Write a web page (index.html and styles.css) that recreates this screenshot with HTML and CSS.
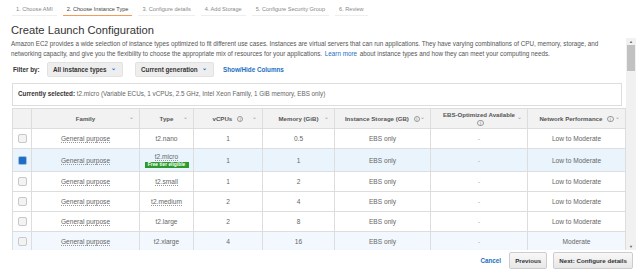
FILE: index.html
```html
<!DOCTYPE html>
<html lang="en">
  <head>
    <meta charset="UTF-8" />
    <title>Create Launch Configuration</title>
    <link rel="stylesheet" href="styles.css">
  </head>
  <body>
    <nav class="tabs">
      <span class="tab">1. Choose AMI</span>
      <span class="tab active">2. Choose Instance Type</span>
      <span class="tab">3. Configure details</span>
      <span class="tab">4. Add Storage</span>
      <span class="tab">5. Configure Security Group</span>
      <span class="tab">6. Review</span>
    </nav>

    <h1>Create Launch Configuration</h1>

    <div class="main">
      <div class="scroll-area">
        <p class="intro">
          Amazon EC2 provides a wide selection of instance types optimized to fit different use cases. Instances are virtual servers that can run applications. They have varying combinations of CPU, memory, storage, and networking capacity, and give you the flexibility to choose the appropriate mix of resources for your applications. <a href="#">Learn more</a> about instance types and how they can meet your computing needs.
        </p>

        <div class="filters">
          <span class="filter-label">Filter by:</span>
          <span class="select select-types">All instance types <span class="caret">&#8964;</span></span>
          <span class="select select-gen">Current generation <span class="caret">&#8964;</span></span>
          <a href="#" class="columns-link">Show/Hide Columns</a>
        </div>

        <div class="selected-box">
          <b>Currently selected:</b> t2.micro (Variable ECUs, 1 vCPUs, 2.5 GHz, Intel Xeon Family, 1 GiB memory, EBS only)
        </div>

        <table class="types">
          <thead>
            <tr>
              <th class="col-check"></th>
              <th class="col-family"><div class="th-in">Family <span class="sort">&#8964;</span></div></th>
              <th class="col-type"><div class="th-in">Type <span class="sort">&#8964;</span></div></th>
              <th class="col-cpu"><div class="th-in">vCPUs <i class="info">i</i> <span class="sort">&#8964;</span></div></th>
              <th class="col-mem"><div class="th-in">Memory (GiB) <span class="sort">&#8964;</span></div></th>
              <th class="col-storage"><div class="th-in">Instance Storage (GB) <i class="info">i</i> <span class="sort">&#8964;</span></div></th>
              <th class="col-ebs"><div class="th-in">EBS-Optimized Available<br><i class="info">i</i> <span class="sort">&#8964;</span></div></th>
              <th class="col-net"><div class="th-in">Network Performance <i class="info">i</i> <span class="sort">&#8964;</span></div></th>
            </tr>
          </thead>
          <tbody>
            <tr>
              <td><span class="check"></span></td>
              <td><span class="dotted">General purpose</span></td>
              <td>t2.nano</td>
              <td>1</td>
              <td>0.5</td>
              <td>EBS only</td>
              <td class="dash">-</td>
              <td>Low to Moderate</td>
            </tr>
            <tr class="row-selected">
              <td><span class="check checked"></span></td>
              <td><span class="dotted">General purpose</span></td>
              <td class="type-cell"><span class="dotted">t2.micro</span><span class="free">Free tier eligible</span></td>
              <td>1</td>
              <td>1</td>
              <td>EBS only</td>
              <td class="dash">-</td>
              <td>Low to Moderate</td>
            </tr>
            <tr>
              <td><span class="check"></span></td>
              <td><span class="dotted">General purpose</span></td>
              <td><span class="dotted">t2.small</span></td>
              <td>1</td>
              <td>2</td>
              <td>EBS only</td>
              <td class="dash">-</td>
              <td>Low to Moderate</td>
            </tr>
            <tr>
              <td><span class="check"></span></td>
              <td><span class="dotted">General purpose</span></td>
              <td><span class="dotted">t2.medium</span></td>
              <td>2</td>
              <td>4</td>
              <td>EBS only</td>
              <td class="dash">-</td>
              <td>Low to Moderate</td>
            </tr>
            <tr>
              <td><span class="check"></span></td>
              <td><span class="dotted">General purpose</span></td>
              <td>t2.large</td>
              <td>2</td>
              <td>8</td>
              <td>EBS only</td>
              <td class="dash">-</td>
              <td>Low to Moderate</td>
            </tr>
            <tr class="row-hover">
              <td><span class="check"></span></td>
              <td><span class="dotted">General purpose</span></td>
              <td>t2.xlarge</td>
              <td>4</td>
              <td>16</td>
              <td>EBS only</td>
              <td class="dash">-</td>
              <td>Moderate</td>
            </tr>
          </tbody>
        </table>
      </div>

      <div class="scrollbar">
        <span class="arrow">&#9650;</span>
        <div class="track"><div class="thumb"></div></div>
        <span class="arrow">&#9660;</span>
      </div>
    </div>

    <footer class="actions">
      <a href="#" class="cancel">Cancel</a>
      <button class="btn">Previous</button>
      <button class="btn">Next: Configure details</button>
    </footer>
  </body>
</html>
```

FILE: styles.css
```css
:root {
  --text: #444444;
  --muted: #777777;
  --link: #1a6fc2;
  --border: #dddddd;
  --header-bg: #f2f2f2;
  --row-selected: #eaf4fd;
  --orange: #f29c5c;
}

* {
  margin: 0;
  padding: 0;
  box-sizing: border-box;
}

body {
  font-family: "Liberation Sans", Arial, sans-serif;
  color: var(--text);
  background: #ffffff;
  width: 640px;
  height: 275px;
  overflow: hidden;
}

a {
  color: var(--link);
  text-decoration: none;
}

/* wizard steps */
.tabs {
  display: flex;
  gap: 6px;
  padding: 4px 0 0 12px;
  height: 18px;
}

.tab {
  font-size: 5.6px;
  color: #888888;
  padding: 2px 4px 3px;
  border-bottom: 1.5px solid #eeeeee;
  height: 12px;
}

.tab.active {
  color: #444444;
  border-bottom-color: var(--orange);
}

h1 {
  font-size: 11.2px;
  font-weight: normal;
  color: #333333;
  padding: 6px 0 0 11px;
  height: 20px;
  line-height: 12px;
}

/* scrolling body */
.main {
  display: flex;
  height: 212px;
}

.scroll-area {
  width: 626px;
  overflow: hidden;
  padding-left: 12px;
}

.intro {
  font-size: 6.3px;
  line-height: 9.5px;
  color: #555555;
  margin: 1px 0 0 -1px;
  width: 614px;
}

.intro a {
  margin: 0 1px;
}

.filters {
  display: flex;
  align-items: center;
  height: 15px;
  margin-top: 4px;
  font-size: 6.3px;
  font-weight: bold;
}

.filter-label {
  color: #333333;
  width: 35px;
  padding-left: 1px;
}

.select {
  display: flex;
  align-items: center;
  justify-content: space-between;
  height: 15px;
  padding: 0 6px 0 5px;
  background: #eeeeee;
  border: 1px solid #e2e2e2;
  border-radius: 2px;
  color: #333333;
}

.select-types {
  width: 76px;
}

.select-gen {
  width: 79px;
  margin-left: 12px;
}

.caret {
  color: var(--link);
  font-size: 6px;
  line-height: 1;
  margin-top: -3px;
}

.columns-link {
  margin-left: 9px;
}

.selected-box {
  margin-top: 6px;
  height: 23px;
  width: 610px;
  border: 1px solid var(--border);
  font-size: 6.3px;
  padding: 6px 5px;
  color: #666666;
}

.selected-box b {
  color: #333333;
}

/* instance table */
.types {
  margin-top: 2px;
  width: 613px;
  border-collapse: collapse;
  table-layout: fixed;
  font-size: 6.6px;
  color: #666666;
}

.types th,
.types td {
  border: 1px solid var(--border);
  text-align: center;
  vertical-align: middle;
}

.types th {
  background: var(--header-bg);
  height: 20px;
  font-weight: bold;
  color: #555555;
  font-size: 6.1px;
  line-height: 8px;
}

.th-in {
  position: relative;
  padding: 0 8px;
}

.sort {
  position: absolute;
  right: 5px;
  top: 50%;
  margin-top: -6px;
  color: #999999;
  font-weight: normal;
  font-size: 6px;
}

.info {
  display: inline-block;
  width: 6.5px;
  height: 6.5px;
  line-height: 5.5px;
  border: 0.8px solid #999999;
  border-radius: 50%;
  font-style: normal;
  font-weight: normal;
  font-size: 4.5px;
  color: #888888;
  margin-left: 3px;
  vertical-align: middle;
}

.col-check { width: 19px; }
.col-family { width: 108px; }
.col-type { width: 54px; }
.col-cpu { width: 69px; }
.col-mem { width: 72px; }
.col-storage { width: 96px; }
.col-ebs { width: 97px; }
.col-net { width: 98px; }

.types td {
  height: 20px;
}

.types tr.row-selected td {
  height: 23px;
  background: var(--row-selected);
}

.types tr.row-hover td {
  background: #f2f8fd;
}

.types td.dash {
  color: #aaaaaa;
}

.dotted {
  border-bottom: 1px dotted #999999;
}

.type-cell {
  line-height: 7px;
}

.type-cell .dotted {
  display: inline-block;
  line-height: 7px;
}

.free {
  display: block;
  width: 44px;
  margin: 1px auto 0;
  background: #2e9a2e;
  color: #ffffff;
  font-weight: bold;
  font-size: 4.9px;
  line-height: 6px;
}

.check {
  display: block;
  width: 9px;
  height: 9px;
  margin: 0 auto;
  border: 1px solid #c8c8c8;
  border-radius: 2px;
  background: #f3f3f3;
}

.check.checked {
  background: #1f6ec4;
  border-color: #9dbfe3;
}

/* fake scrollbar */
.scrollbar {
  width: 10px;
  display: flex;
  flex-direction: column;
  background: #f1f1f1;
}

.arrow {
  height: 7px;
  font-size: 4px;
  line-height: 7px;
  text-align: center;
  color: #666666;
}

.track {
  flex: 1;
}

.thumb {
  margin: 0 1px;
  height: 26px;
  background: #c1c1c1;
}

/* footer buttons */
.actions {
  display: flex;
  justify-content: flex-end;
  align-items: center;
  gap: 6px;
  padding: 1px 7px 0 0;
  height: 20px;
}

.cancel {
  font-size: 6.3px;
  font-weight: bold;
  margin-right: 2px;
}

.btn {
  font-family: "Liberation Sans", Arial, sans-serif;
  font-size: 6.2px;
  font-weight: bold;
  color: #333333;
  height: 17px;
  padding: 0 5px;
  border: 1px solid #cccccc;
  border-radius: 2px;
  background: linear-gradient(#f8f8f8, #e7e7e7);
}
```
